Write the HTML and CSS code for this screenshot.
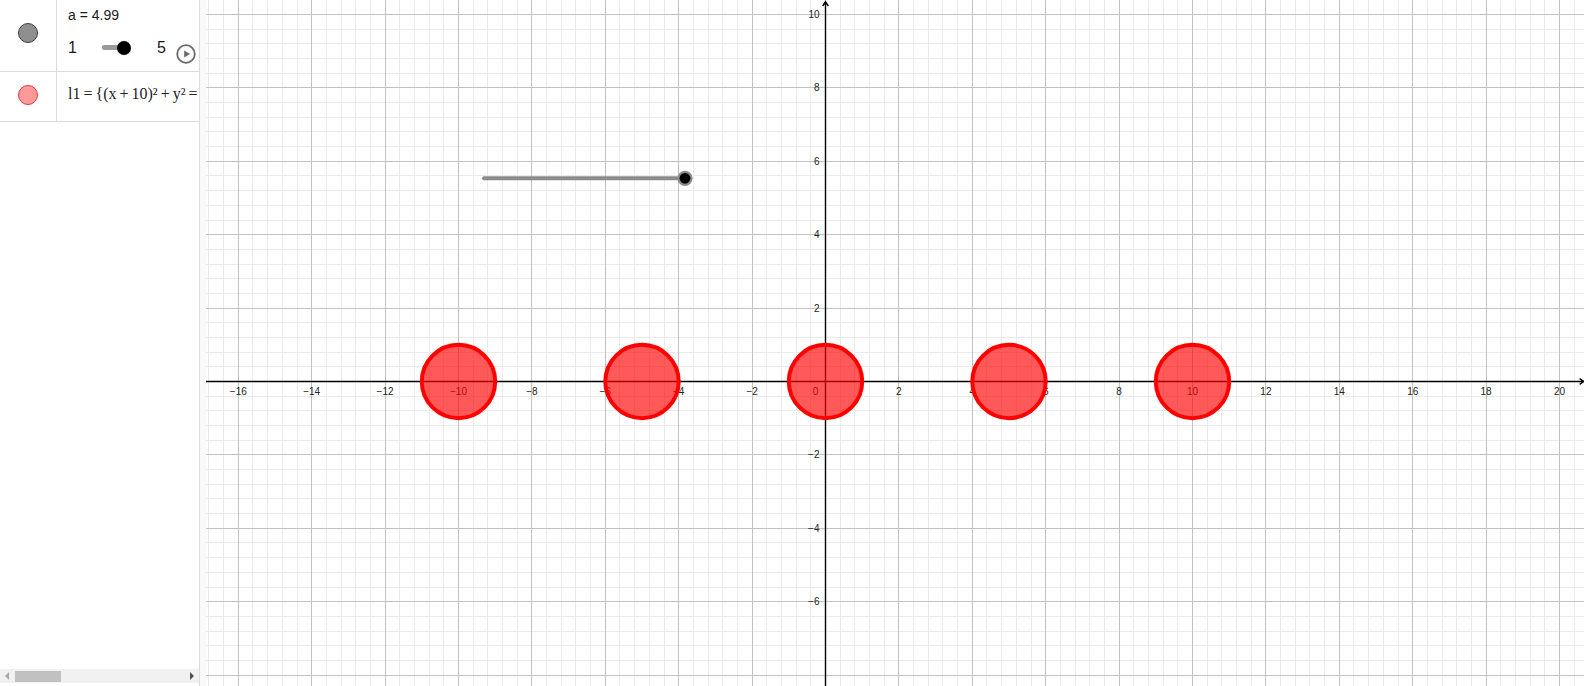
FILE: index.html
```html
<!DOCTYPE html>
<html lang="en">
<head>
<meta charset="utf-8">
<title>GeoGebra</title>
<link rel="stylesheet" href="styles.css">
</head>
<body>
<div class="app">
  <aside class="algebra">
    <div class="av-rows">
      <div class="av-row av-row-slider">
        <div class="marble-cell"><span class="marble marble-gray"></span></div>
        <div class="av-content">
          <div class="av-def">a = 4.99</div>
          <div class="av-slider">
            <span class="av-bound">1</span>
            <span class="av-track"><span class="av-track-fill"></span><span class="av-thumb"></span></span>
            <span class="av-bound av-max">5</span>
            <span class="av-play"><svg viewBox="0 0 20 20" width="20" height="20"><circle class="play-ring" cx="10" cy="10" r="8.8"/><path class="play-tri" d="M8.2 6.4 L14 10 L8.2 13.6Z"/></svg></span>
          </div>
        </div>
      </div>
      <div class="av-row av-row-locus">
        <div class="marble-cell"><span class="marble marble-red"></span></div>
        <div class="av-content av-content-math"><span class="av-math">l1 = {(x + 10)² + y² =</span></div>
      </div>
    </div>
    <div class="hscroll">
      <span class="hs-btn hs-left"></span>
      <span class="hs-thumb"></span>
      <span class="hs-spacer"></span>
      <span class="hs-btn hs-right"></span>
    </div>
  </aside>
  <div class="splitter"></div>
  <main class="graphics">
    <svg class="plot" viewBox="206 0 1378 686" width="1378" height="686">
      <path id="grid-minor" class="grid-minor" d=""/>
      <path id="grid-major" class="grid-major" d=""/>
      <path class="axis" d="M206 381.5H1584M1579.6 378.7L1584 381.5L1579.6 384.3M825.5 686V1.6M822.7 6L825.5 1.6L828.3 6"/>
      <g class="xlabels">
        <text x="238.3" y="395">−16</text>
        <text x="311.7" y="395">−14</text>
        <text x="385.1" y="395">−12</text>
        <text x="458.5" y="395">−10</text>
        <text x="531.9" y="395">−8</text>
        <text x="605.3" y="395">−6</text>
        <text x="678.7" y="395">−4</text>
        <text x="752.1" y="395">−2</text>
        <text x="815.6" y="395">0</text>
        <text x="898.9" y="395">2</text>
        <text x="972.3" y="395">4</text>
        <text x="1045.7" y="395">6</text>
        <text x="1119.1" y="395">8</text>
        <text x="1192.5" y="395">10</text>
        <text x="1265.9" y="395">12</text>
        <text x="1339.3" y="395">14</text>
        <text x="1412.7" y="395">16</text>
        <text x="1486.1" y="395">18</text>
        <text x="1559.5" y="395">20</text>
      </g>
      <g class="ylabels">
        <text x="819.5" y="18">10</text>
        <text x="819.5" y="91.4">8</text>
        <text x="819.5" y="164.8">6</text>
        <text x="819.5" y="238.2">4</text>
        <text x="819.5" y="311.6">2</text>
        <text x="819.5" y="458.4">−2</text>
        <text x="819.5" y="531.8">−4</text>
        <text x="819.5" y="605.2">−6</text>
      </g>
      <g class="locus">
        <circle cx="458.5" cy="381.5" r="36.7"/>
        <circle cx="642" cy="381.5" r="36.7"/>
        <circle cx="825.5" cy="381.5" r="36.7"/>
        <circle cx="1009" cy="381.5" r="36.7"/>
        <circle cx="1192.5" cy="381.5" r="36.7"/>
      </g>
      <g class="slider">
        <line class="slider-line" x1="484" y1="178.3" x2="685" y2="178.3"/>
        <circle class="slider-halo" cx="685" cy="178.3" r="7.6"/>
        <circle class="slider-point" cx="685" cy="178.3" r="5.4"/>
      </g>
    </svg>
  </main>
</div>
<script src="script.js"></script>
</body>
</html>
```

FILE: styles.css
```css
* { box-sizing: border-box; }
html, body { margin: 0; padding: 0; background: #fff; }
body { width: 1586px; height: 686px; overflow: hidden; font-family: "Liberation Sans", Arial, sans-serif; color: #1a1a1a; }

.app { display: flex; height: 686px; }

.algebra {
  width: 200px;
  flex: none;
  border-right: 1px solid #dcdcdc;
  display: flex;
  flex-direction: column;
  overflow: hidden;
  background: #fff;
}
.av-rows { flex: 1; }
.av-row { display: flex; border-bottom: 1px solid #dcdcdc; }
.av-row-slider { height: 72px; }
.av-row-locus { height: 50px; }

.marble-cell {
  width: 57px;
  flex: none;
  border-right: 1px solid #dcdcdc;
  display: flex;
  justify-content: center;
  align-items: flex-start;
}
.av-row-slider .marble-cell { padding-top: 23px; }
.av-row-locus .marble-cell { padding-top: 13px; }
.marble { width: 20px; height: 20px; border-radius: 50%; display: block; margin-left: -1px; }
.marble-gray { background: #8f8f8f; border: 1px solid #3c3c3c; }
.marble-red { background: #ff9a9a; border: 1px solid #e03a3a; }

.av-content { flex: 1; min-width: 0; padding-left: 11px; overflow: hidden; }
.av-def { font-size: 14px; line-height: 20px; padding-top: 5px; }

.av-slider { display: flex; align-items: center; height: 21px; margin-top: 12px; }
.av-bound { font-size: 16px; line-height: 21px; }
.av-track { display: flex; align-items: center; margin-left: 25px; }
.av-track-fill { width: 22px; height: 5px; background: #9a9a9a; border-radius: 2px; }
.av-thumb { width: 14px; height: 14px; border-radius: 50%; background: #000; margin-left: -7px; }
.av-max { margin-left: 26px; }
.av-play { margin-left: 10px; align-self: flex-start; margin-top: 7px; display: block; width: 20px; height: 20px; }
.av-play svg { display: block; }
.play-ring { fill: #fff; stroke: #6a6a6a; stroke-width: 1.8; }
.play-tri { fill: #6a6a6a; }

.av-content-math { padding-top: 12px; }
.av-math { font-family: "Liberation Serif", "Times New Roman", serif; font-size: 16px; line-height: 20px; white-space: nowrap; color: #222; word-spacing: -1px; }

.hscroll { height: 14px; margin-bottom: 3px; background: #f1f1f1; display: flex; align-items: center; }
.hs-btn { width: 14px; height: 14px; display: flex; align-items: center; justify-content: center; flex: none; }
.hs-left::before { content: ""; border-right: 4px solid #a8a8a8; border-top: 4px solid transparent; border-bottom: 4px solid transparent; }
.hs-right::before { content: ""; border-left: 4px solid #505050; border-top: 4px solid transparent; border-bottom: 4px solid transparent; }
.hs-thumb { width: 46px; height: 11px; margin-left: 1px; background: #c1c1c1; flex: none; }
.hs-spacer { flex: 1; }

.splitter { width: 6px; flex: none; background: #f9f9f9; }

.graphics { width: 1378px; flex: none; height: 686px; overflow: hidden; }
.plot { display: block; }

.grid-minor { fill: none; stroke: #ebebeb; stroke-width: 1; shape-rendering: crispEdges; }
.grid-major { fill: none; stroke: #c2c2c2; stroke-width: 1; shape-rendering: crispEdges; }
.axis { fill: none; stroke: #000; stroke-width: 1.4; }

.xlabels text, .ylabels text { font-family: "Liberation Sans", Arial, sans-serif; font-size: 10px; fill: #222; }
.xlabels text { text-anchor: middle; }
.ylabels text { text-anchor: end; }

.locus circle { fill: rgba(255, 0, 0, 0.65); stroke: #f00; stroke-width: 4; }

.slider-line { stroke: #8c8c8c; stroke-width: 4; stroke-linecap: round; }
.slider-halo { fill: #8a8a8a; }
.slider-point { fill: #000; }
```

FILE: script.js
```javascript
(function () {
  var s = 36.7, ox = 825.5, oy = 381.5;
  var step = s * 0.4;
  var minor = "", major = "";
  function snap(v) { return Math.round(v - 0.5) + 0.5; }
  for (var i = -60; i <= 60; i++) {
    var x = ox + i * step;
    if (x < 206 || x > 1584) continue;
    var seg = "M" + snap(x) + " 0V686";
    if (i % 5 === 0) major += seg; else minor += seg;
  }
  for (var j = -30; j <= 30; j++) {
    var y = oy - j * step;
    if (y < 0 || y > 686) continue;
    var seg2 = "M206 " + snap(y) + "H1584";
    if (j % 5 === 0) major += seg2; else minor += seg2;
  }
  document.getElementById("grid-minor").setAttribute("d", minor);
  document.getElementById("grid-major").setAttribute("d", major);
})();
```
